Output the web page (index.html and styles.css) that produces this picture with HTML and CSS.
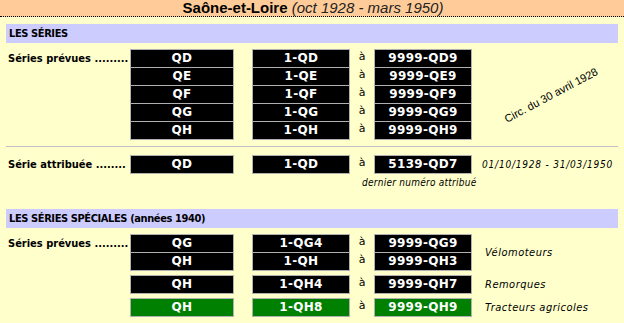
FILE: index.html
```html
<!DOCTYPE html>
<html lang="fr">
<head>
<meta charset="utf-8">
<title>Saône-et-Loire</title>
<link rel="stylesheet" href="styles.css">
</head>
<body>
<div class="title"><b>Saône-et-Loire</b> <i>(oct 1928 - mars 1950)</i></div>
<div class="main">
  <div class="band">LES SÉRIES</div>

  <div class="group g-first">
    <div class="label">Séries prévues .........</div>
    <div class="stack w104">
      <div class="cell">QD</div><div class="cell">QE</div><div class="cell">QF</div><div class="cell">QG</div><div class="cell">QH</div>
    </div>
    <div class="stack w98 ml18">
      <div class="cell">1-QD</div><div class="cell">1-QE</div><div class="cell">1-QF</div><div class="cell">1-QG</div><div class="cell">1-QH</div>
    </div>
    <div class="acol"><span>à</span><span>à</span><span>à</span><span>à</span><span>à</span></div>
    <div class="stack w98">
      <div class="cell">9999-QD9</div><div class="cell">9999-QE9</div><div class="cell">9999-QF9</div><div class="cell">9999-QG9</div><div class="cell">9999-QH9</div>
    </div>
    <div class="note note-circ"><span class="circ">Circ. du 30 avril 1928</span></div>
  </div>

  <div class="rule"></div>

  <div class="group g-attr">
    <div class="label">Série attribuée ........</div>
    <div class="stack w104"><div class="cell">QD</div></div>
    <div class="stack w98 ml18"><div class="cell">1-QD</div></div>
    <div class="acol"><span>à</span></div>
    <div class="stack w98"><div class="cell">5139-QD7</div></div>
    <div class="note note-date">01/10/1928 - 31/03/1950</div>
  </div>
  <div class="last">dernier numéro attribué</div>

  <div class="band band2">LES SÉRIES SPÉCIALES (années 1940)</div>

  <div class="group g-first">
    <div class="label">Séries prévues .........</div>
    <div class="stack w104"><div class="cell">QG</div><div class="cell">QH</div></div>
    <div class="stack w98 ml18"><div class="cell">1-QG4</div><div class="cell">1-QH</div></div>
    <div class="acol"><span>à</span><span>à</span></div>
    <div class="stack w98"><div class="cell">9999-QG9</div><div class="cell">9999-QH3</div></div>
    <div class="note note-it">Vélomoteurs</div>
  </div>
  <div class="group g-next">
    <div class="label"></div>
    <div class="stack w104"><div class="cell">QH</div></div>
    <div class="stack w98 ml18"><div class="cell">1-QH4</div></div>
    <div class="acol"><span>à</span></div>
    <div class="stack w98"><div class="cell">9999-QH7</div></div>
    <div class="note note-it">Remorques</div>
  </div>
  <div class="group g-next">
    <div class="label"></div>
    <div class="stack w104"><div class="cell green">QH</div></div>
    <div class="stack w98 ml18"><div class="cell green">1-QH8</div></div>
    <div class="acol"><span>à</span></div>
    <div class="stack w98"><div class="cell green">9999-QH9</div></div>
    <div class="note note-it">Tracteurs agricoles</div>
  </div>
</div>
</body>
</html>
```
FILE: styles.css
```css
* { box-sizing: border-box; }
html, body { margin: 0; padding: 0; }
body {
  background: #FFFFCC;
  font-family: "DejaVu Sans", Verdana, sans-serif;
  color: #000;
  width: 624px;
  height: 323px;
  overflow: hidden;
}
.title {
  background: #FFCC99;
  height: 17px;
  border-bottom: 1px dotted #000;
  text-align: center;
  font-family: "Liberation Sans", Arial, sans-serif;
  font-size: 15px;
  line-height: 16px;
  padding-left: 2px;
}
.title b { font-size: 15px; }
.title i { font-weight: normal; color: #222; }
.main { padding: 7px 6px 0 6px; }
.band {
  background: #CCCCFF;
  height: 19px;
  line-height: 19px;
  padding-left: 3px;
  font-family: "DejaVu Sans Condensed", "DejaVu Sans", sans-serif;
  font-weight: bold;
  font-size: 11px;
  letter-spacing: -0.4px;
}
.band2 { margin-top: 17px; }
.group { display: flex; align-items: flex-start; }
.g-first { margin-top: 6px; }
.g-attr { margin-top: 8px; }
.g-next { margin-top: 4px; }
.label {
  width: 124px;
  padding-left: 2px;
  font-family: "DejaVu Sans Condensed", "DejaVu Sans", sans-serif;
  font-weight: bold;
  font-size: 11px;
  line-height: 19px;
  white-space: nowrap;
}
.stack { display: flex; flex-direction: column; }
.w104 { width: 104px; }
.w98 { width: 98px; }
.ml18 { margin-left: 18px; }
.cell {
  height: 19px;
  background: #000;
  color: #fff;
  border: 1px solid #B0B0B0;
  text-align: center;
  font-weight: bold;
  font-size: 12px;
  line-height: 17px;
  letter-spacing: 0.3px;
}
.cell + .cell { margin-top: -1px; }
.cell.green { background: #008000; }
.acol {
  width: 24px;
  display: flex;
  flex-direction: column;
  align-items: center;
  font-family: "DejaVu Sans", sans-serif;
  font-size: 11px;
}
.acol span { height: 18px; line-height: 15px; }
.note {
  flex: 1;
  font-family: "DejaVu Sans Condensed", "DejaVu Sans", sans-serif;
  font-style: italic;
  font-size: 11px;
}
.note-circ {
  height: 91px;
  display: flex;
  align-items: center;
  justify-content: center;
}
.circ {
  display: inline-block;
  font-family: "Liberation Sans", Arial, sans-serif;
  font-style: normal;
  font-size: 11px;
  transform: rotate(-28deg);
  margin-left: 12px;
}
.note-date { padding-left: 10px; line-height: 19px; font-size: 10px; letter-spacing: 0.8px; }
.note-it { padding-left: 13px; align-self: center; letter-spacing: 0.5px; }
.last {
  padding-left: 356px;
  font-family: "DejaVu Sans Condensed", "DejaVu Sans", sans-serif;
  font-style: italic;
  font-size: 10px;
  letter-spacing: 0.25px;
  line-height: 18px;
}
.rule { height: 1px; background: #C0C0C8; margin-top: 6px; }
```
